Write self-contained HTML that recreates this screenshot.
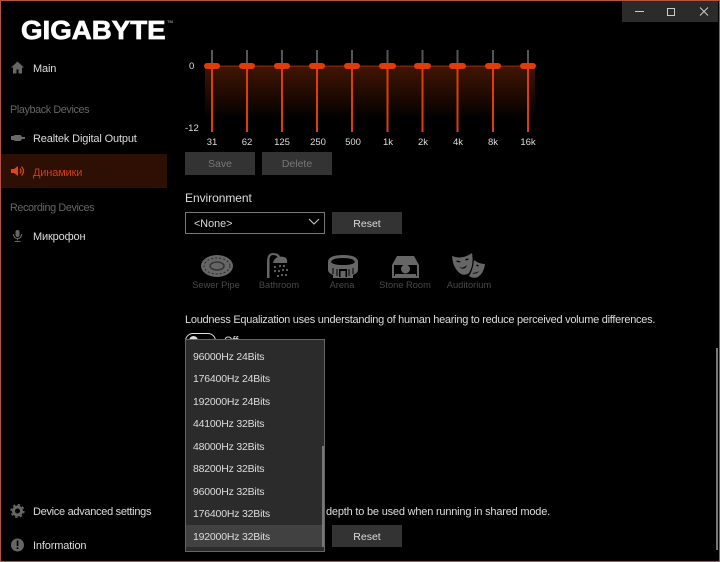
<!DOCTYPE html>
<html><head><meta charset="utf-8">
<style>
html,body{margin:0;padding:0;background:#000;}
#r{position:relative;width:720px;height:562px;background:#000;overflow:hidden;font-family:"Liberation Sans",sans-serif;font-size:11px;color:#ddd;box-sizing:border-box;filter:blur(.3px);}
#b{position:absolute;left:0;top:0;width:720px;height:562px;box-sizing:border-box;border:1px solid #b5533f;z-index:9;pointer-events:none;}
.t{position:absolute;white-space:nowrap;line-height:14px;}
.s{letter-spacing:-.15px;}
.g{color:#666;font-size:10.8px;letter-spacing:-.38px;}
.a{position:absolute;}
.btn{position:absolute;width:70px;height:22px;background:#333;text-align:center;line-height:24px;color:#ddd;font-size:10.5px;}
.th{position:absolute;top:63px;width:16.5px;height:6px;border-radius:3px;background:#e03c08;}
.li{position:absolute;left:193px;white-space:nowrap;line-height:14px;color:#ddd;font-size:10.5px;letter-spacing:-.2px;}
.l{position:absolute;top:136px;width:30px;text-align:center;font-size:9.5px;line-height:14px;color:#ddd;}
.e{position:absolute;top:278px;text-align:center;width:70px;font-size:9.3px;color:#484848;line-height:14px;}
</style></head><body>
<div id="r">
<div id="b"></div>
<!-- title buttons -->
<div class="a" style="left:622px;top:1px;width:96px;height:21px;background:#2b2b2b;"></div>
<svg class="a" style="left:622px;top:1px" width="96" height="22" fill="none" stroke="#ccc" stroke-width="1"><path d="M13 10.500h9"/><rect x="45.500" y="7.500" width="7" height="7"/><path d="M78 6.500l8 8M86 6.500l-8 8"/></svg>
<!-- logo -->
<div class="t" style="left:21px;top:17px;font-size:26px;line-height:26px;font-weight:bold;color:#fff;-webkit-text-stroke:.7px #fff;transform-origin:0 0;transform:scaleX(1.065);">GIGABYTE</div>
<div class="t" style="left:167px;top:19px;font-size:4px;line-height:5px;color:#ccc;">TM</div>
<!-- sidebar -->
<div class="a" style="left:1px;top:154px;width:166px;height:34px;background:#2e0f04;"></div>
<div class="t s" style="left:33px;top:62px;">Main</div>
<div class="t g" style="left:10px;top:103px;">Playback Devices</div>
<div class="t s" style="left:33px;top:132px;">Realtek Digital Output</div>
<div class="t s" style="left:33px;top:166px;color:#d63c12;">Динамики</div>
<div class="t g" style="left:10px;top:201px;">Recording Devices</div>
<div class="t s" style="left:33px;top:230px;">Микрофон</div>
<div class="t" style="left:33px;top:505px;letter-spacing:-.3px;">Device advanced settings</div>
<div class="t s" style="left:33px;top:539px;">Information</div>
<svg class="a" style="left:0;top:50px" width="34" height="200">
<path fill="#666" d="M17.500 11.500L11 17.500h2V23.500h3.500v-4h2v4H22v-6h2z"/>
<g fill="#6a6a6a"><rect x="11" y="86" width="3" height="4"/><rect x="13" y="85" width="9" height="6" rx="2.500"/><rect x="22" y="87" width="3" height="2"/></g>
<path fill="#e0441a" d="M11 119h3l4-3v10l-4-3h-3z"/><path fill="none" stroke="#e0441a" stroke-width="1.200" d="M20 118.500q2 2.500 0 5M21.500 116.500q4 4.500 0 9"/>
<rect x="15.500" y="180" width="4" height="7" rx="2" fill="#666"/><path fill="none" stroke="#666" stroke-width="1.100" d="M13.500 184q0 4.500 4 4.500t4-4.500M17.500 188.500v2M14.500 191.500h6"/>
</svg>
<svg class="a" style="left:8px;top:502px" width="20" height="52">
<circle cx="9.500" cy="9" r="4" fill="none" stroke="#666" stroke-width="3"/><circle cx="9.500" cy="9" r="6.300" fill="none" stroke="#666" stroke-width="1.600" stroke-dasharray="2.400 2.550"/>
<circle cx="9.500" cy="43" r="6.500" fill="#666"/><rect x="8.700" y="38.500" width="1.700" height="5.500" fill="#000"/><rect x="8.700" y="45.300" width="1.700" height="1.700" fill="#000"/>
</svg>
<!-- EQ -->
<svg class="a" style="left:180px;top:40px" width="370" height="100">
<defs><linearGradient id="g" x1="0" y1="0" x2="0" y2="1"><stop offset="0" stop-color="#421503"/><stop offset="1" stop-color="#000"/></linearGradient></defs>
<rect x="25" y="26" width="330" height="54" fill="url(#g)"/>
<rect x="25" y="25.500" width="330" height="1.500" fill="#7a2404"/>
<g fill="#e03c08">
<rect x="31" y="26" width="2" height="66"/><rect x="66" y="26" width="2" height="66"/><rect x="101" y="26" width="2" height="66"/><rect x="136" y="26" width="2" height="66"/><rect x="171" y="26" width="2" height="66"/><rect x="206.500" y="26" width="2" height="66"/><rect x="241.500" y="26" width="2" height="66"/><rect x="276.500" y="26" width="2" height="66"/><rect x="312" y="26" width="2" height="66"/><rect x="347" y="26" width="2" height="66"/>
</g>
<g fill="#555">
<rect x="31" y="10" width="2" height="16"/><rect x="66" y="10" width="2" height="16"/><rect x="101" y="10" width="2" height="16"/><rect x="136" y="10" width="2" height="16"/><rect x="171" y="10" width="2" height="16"/><rect x="206.500" y="10" width="2" height="16"/><rect x="241.500" y="10" width="2" height="16"/><rect x="276.500" y="10" width="2" height="16"/><rect x="312" y="10" width="2" height="16"/><rect x="347" y="10" width="2" height="16"/>
</g>
</svg>
<div class="th" style="left:203.500px"></div><div class="th" style="left:238.500px"></div><div class="th" style="left:273.500px"></div><div class="th" style="left:308.500px"></div><div class="th" style="left:343.500px"></div><div class="th" style="left:379px"></div><div class="th" style="left:414px"></div><div class="th" style="left:449px"></div><div class="th" style="left:484.500px"></div><div class="th" style="left:519.500px"></div>
<div class="t" style="left:189px;top:60px;font-size:9.500px;">0</div>
<div class="t" style="left:185px;top:122px;font-size:9.500px;">-12</div>
<div class="l" style="left:197px">31</div><div class="l" style="left:232px">62</div><div class="l" style="left:267px">125</div><div class="l" style="left:303px">250</div><div class="l" style="left:338px">500</div><div class="l" style="left:373px">1k</div><div class="l" style="left:408px">2k</div><div class="l" style="left:443px">4k</div><div class="l" style="left:478px">8k</div><div class="l" style="left:513px">16k</div>
<div class="btn" style="left:185px;top:152px;height:23px;color:#777;">Save</div>
<div class="btn" style="left:262px;top:152px;height:23px;color:#777;">Delete</div>
<!-- Environment -->
<div class="t" style="left:185px;top:191px;font-size:12px;letter-spacing:-.05px;">Environment</div>
<div class="a" style="left:185px;top:212px;width:140px;height:22px;box-sizing:border-box;border:1px solid #777;"></div>
<div class="t" style="left:194px;top:217px;font-size:10.800px;">&lt;None&gt;</div>
<svg class="a" style="left:308px;top:218px" width="12" height="8" fill="none" stroke="#ccc" stroke-width="1"><path d="M1 1l5 5 5-5"/></svg>
<div class="btn" style="left:332px;top:212px;">Reset</div>
<!-- env icons -->
<svg class="a" style="left:190px;top:250px" width="310" height="32">
<g fill="#666">
<ellipse cx="27" cy="16" rx="16" ry="11"/>
<ellipse cx="27" cy="16" rx="13" ry="8" fill="none" stroke="#2a2a2a" stroke-width="1" stroke-dasharray="2 2"/>
<ellipse cx="27" cy="16" rx="7" ry="4" fill="none" stroke="#333" stroke-width="1.500"/>
<path d="M77 28V12q0-9 6-9t7 4l-2 1q-1-3-5-3t-3.500 7v16z"/>
<path d="M83 13q2-8 11-6 4 1 3 6z"/>
<circle cx="85" cy="17" r="1.100"/><circle cx="90" cy="16" r="1.100"/><circle cx="94" cy="16" r="1.100"/><circle cx="85" cy="21" r="1.100"/><circle cx="89" cy="21" r="1.100"/><circle cx="93" cy="20" r="1.100"/><circle cx="97" cy="20" r="1.100"/><circle cx="88" cy="26" r="1.100"/><circle cx="92" cy="25" r="1.100"/><circle cx="96" cy="25" r="1.100"/>
<path fill-rule="evenodd" d="M138 12q0-7 15-7t15 7v8q0 3-5 5v3h-20v-3q-5-2-5-5zm3 0q2 3 12 3t12-3q-1-4-12-4t-12 4z"/>
<path stroke="#000" stroke-width="1" fill="none" d="M143 18v6M147 19v7M159 19v7M163 18v6"/>
<rect x="149" y="19" width="8" height="8" fill="#000"/><rect x="150.500" y="21" width="5" height="6" fill="#666"/>
<path fill-rule="evenodd" d="M207 6h17l5 9v13h-27V15zM204 15v11h23V15z"/>
<circle cx="215.500" cy="19" r="4.500"/><rect x="205" y="24" width="21" height="2"/>
<path fill-rule="evenodd" d="M262 6q10 4 20-3 2 12-3 20-4 3-8 1-8-5-9-18zM266 11q2 2 5 1-3-2-5-1zM275 10q2 1 4-1-3-1-4 1zM269 17q4 2 8-2-2 6-8 2z"/>
<path fill-rule="evenodd" d="M284 10q5 4 11 4-1 9-7 13-5 2-9-1 4-6 5-16zM286 15q1 2 3 1-1-2-3-1zM282 23q4 0 7-2-3 4-7 2z"/>
</g>
</svg>
<div class="e" style="left:181px;">Sewer Pipe</div>
<div class="e" style="left:244px;">Bathroom</div>
<div class="e" style="left:307px;">Arena</div>
<div class="e" style="left:370px;">Stone Room</div>
<div class="e" style="left:434px;">Auditorium</div>
<!-- loudness -->
<div class="t" style="left:185px;top:313px;font-size:11px;letter-spacing:-.27px;">Loudness Equalization uses understanding of human hearing to reduce perceived volume differences.</div>
<div class="a" style="left:185px;top:333px;width:29px;height:14px;border:1.500px solid #ddd;border-radius:9px;box-sizing:content-box;"></div>
<div class="a" style="left:189px;top:336px;width:9px;height:9px;border-radius:50%;background:#ddd;"></div>
<div class="t" style="left:224px;top:334px;">Off</div>
<div class="t" style="left:326px;top:505px;font-size:11px;letter-spacing:-.2px;">depth to be used when running in shared mode.</div>
<div class="btn" style="left:332px;top:525px;">Reset</div>
<!-- dropdown -->
<div class="a" style="left:185px;top:339px;width:140px;height:213px;box-sizing:border-box;border:1px solid #666;background:#2b2b2b;"></div>
<div class="a" style="left:186px;top:525px;width:138px;height:22px;background:#414141;"></div>
<div class="a" style="left:322px;top:446px;width:2px;height:101px;background:#777;"></div>
<div class="li" style="top:350px;">96000Hz 24Bits</div>
<div class="li" style="top:372px;">176400Hz 24Bits</div>
<div class="li" style="top:395px;">192000Hz 24Bits</div>
<div class="li" style="top:417px;">44100Hz 32Bits</div>
<div class="li" style="top:440px;">48000Hz 32Bits</div>
<div class="li" style="top:462px;">88200Hz 32Bits</div>
<div class="li" style="top:485px;">96000Hz 32Bits</div>
<div class="li" style="top:507px;">176400Hz 32Bits</div>
<div class="li" style="top:530px;">192000Hz 32Bits</div>
<!-- main scrollbar -->
<div class="a" style="left:716px;top:348px;width:2px;height:202px;background:#777;"></div>
</div>
</body></html>
